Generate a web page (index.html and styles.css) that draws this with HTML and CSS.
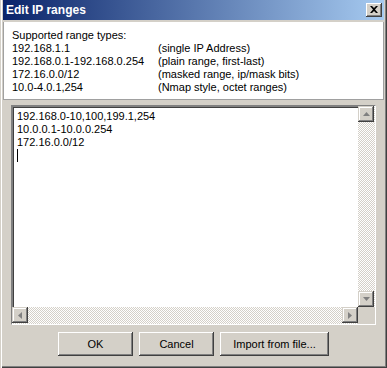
FILE: index.html
```html
<!DOCTYPE html>
<html lang="en">
<head>
  <meta charset="UTF-8">
  <title>Edit IP ranges</title>
  <link rel="stylesheet" href="styles.css">
</head>
<body>
  <div class="window">
    <div class="titlebar">
      <span class="title">Edit IP ranges</span>
      <span class="close">
        <svg width="8" height="7" viewBox="0 0 8 7"><path d="M0 0h2l2 2 2-2h2L5 3.5 8 7H6L4 5 2 7H0l3-3.5z" fill="#000"/></svg>
      </span>
    </div>

    <div class="info">
      <div class="info-head">Supported range types:</div>
      <div class="types">
        <span>192.168.1.1</span><span>(single IP Address)</span>
        <span>192.168.0.1-192.168.0.254</span><span>(plain range, first-last)</span>
        <span>172.16.0.0/12</span><span>(masked range, ip/mask bits)</span>
        <span>10.0-4.0.1,254</span><span>(Nmap style, octet ranges)</span>
      </div>
    </div>

    <div class="editor">
      <div class="editor-text">
        <div>192.168.0-10,100,199.1,254</div>
        <div>10.0.0.1-10.0.0.254</div>
        <div>172.16.0.0/12</div>
        <div><span class="caret"></span></div>
      </div>
      <div class="vscroll">
        <span class="arrow">
          <svg width="7" height="4" viewBox="0 0 7 4"><path d="M3.5 0L7 4H0z" fill="#808080"/></svg>
        </span>
        <span class="track"></span>
        <span class="arrow">
          <svg width="7" height="4" viewBox="0 0 7 4"><path d="M0 0h7L3.5 4z" fill="#808080"/></svg>
        </span>
      </div>
      <div class="hscroll">
        <span class="arrow">
          <svg width="4" height="7" viewBox="0 0 4 7"><path d="M4 0v7L0 3.5z" fill="#808080"/></svg>
        </span>
        <span class="track"></span>
        <span class="arrow">
          <svg width="4" height="7" viewBox="0 0 4 7"><path d="M0 0l4 3.5L0 7z" fill="#808080"/></svg>
        </span>
      </div>
      <div class="corner"></div>
    </div>

    <div class="buttons">
      <button class="btn">OK</button>
      <button class="btn">Cancel</button>
      <button class="btn btn-wide">Import from file...</button>
    </div>
  </div>
</body>
</html>
```

FILE: styles.css
```css
/* Classic dialog look */
body {
  margin: 0;
  font-family: "Liberation Sans", Arial, sans-serif;
  font-size: 11px;
  color: #000;
  background: #d4d0c8;
}

.window {
  width: 387px;
  height: 368px;
  box-sizing: border-box;
  padding: 0 3px 3px 3px;
  background: #d4d0c8;
  box-shadow: inset 1px 0 #d4d0c8, inset 2px 0 #fff, inset -1px -1px #404040, inset -2px -2px #808080;
  display: flex;
  flex-direction: column;
}

/* Title bar */
.titlebar {
  height: 20px;
  margin-bottom: 2px;
  padding: 0 2px 0 3px;
  background: linear-gradient(to right, #0a246a, #a6caf0);
  display: flex;
  align-items: center;
  justify-content: space-between;
}

.title {
  color: #fff;
  font-weight: bold;
  font-size: 12px;
}

.close {
  width: 16px;
  height: 14px;
  box-sizing: border-box;
  background: #d4d0c8;
  box-shadow: inset -1px -1px #404040, inset 1px 1px #fff, inset -2px -2px #808080;
  display: flex;
  align-items: center;
  justify-content: center;
  padding-bottom: 1px;
}

/* Info panel */
.info {
  height: 78px;
  box-sizing: border-box;
  background: #fff;
  border: 1px solid #a0a0a0;
  border-top: none;
  padding: 7px 8px 0 8px;
  line-height: 13px;
}

.types {
  display: grid;
  grid-template-columns: 146px auto;
}

/* Edit box */
.editor {
  height: 220px;
  margin: 5px 8px 0 8px;
  box-sizing: border-box;
  border: 2px solid;
  border-color: #808080 #fff #fff #808080;
  box-shadow: inset 1px 1px #404040, inset -1px -1px #d4d0c8;
  background: #fff;
  display: grid;
  grid-template-columns: 1fr 16px;
  grid-template-rows: 1fr 16px;
}

.editor-text {
  padding: 3px 4px;
  line-height: 13px;
}

.caret {
  display: inline-block;
  width: 1px;
  height: 13px;
  background: #000;
  vertical-align: top;
}

.vscroll,
.hscroll {
  display: flex;
  background-image: conic-gradient(#d4d0c8 25%, #fff 0 50%, #d4d0c8 0 75%, #fff 0);
  background-size: 2px 2px;
}

.vscroll {
  flex-direction: column;
  margin-top: -1px;
  margin-right: -1px;
}

.hscroll {
  margin-left: -1px;
  margin-bottom: -1px;
}

.track {
  flex: 1;
}

.arrow {
  width: 16px;
  height: 16px;
  box-sizing: border-box;
  background: #d4d0c8;
  box-shadow: inset -1px -1px #404040, inset 1px 1px #d4d0c8, inset -2px -2px #808080, inset 2px 2px #fff;
  display: flex;
  align-items: center;
  justify-content: center;
}

.corner {
  background: #d4d0c8;
  margin: 0 -1px -1px 0;
}

/* Buttons */
.buttons {
  display: flex;
  justify-content: center;
  gap: 6px;
  margin-top: 7px;
}

.btn {
  width: 75px;
  height: 24px;
  padding: 0;
  border: none;
  background: #d4d0c8;
  font-family: inherit;
  font-size: 11px;
  color: #000;
  box-shadow: inset -1px -1px #404040, inset 1px 1px #fff, inset -2px -2px #808080;
}

.btn-wide {
  width: 109px;
}
```
